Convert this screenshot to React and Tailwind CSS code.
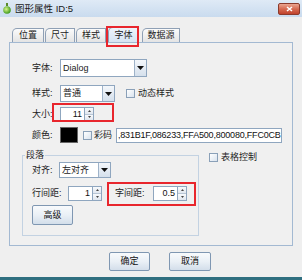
import React from 'react';

const ArrowDown = ({ w = 7, h = 4 }) => (
  <svg width={w} height={h} viewBox="0 0 7 4">
    <path d="M0 0h7L3.5 4z" fill="#111" />
  </svg>
);

function Select({ className, text }) {
  return (
    <div className={`flex bg-white border border-[#8fa6bf] ${className}`}>
      <div className="flex-1 flex items-center pl-[2px] text-[#1a1a1a]">{text}</div>
      <div className="w-[12px] flex items-center justify-center border-l border-[#9fb3c9] bg-gradient-to-b from-[#f4f7fb] to-[#d5e0ec]">
        <ArrowDown />
      </div>
    </div>
  );
}

function Spinner({ className, value }) {
  return (
    <div className={`flex ${className}`}>
      <div className="flex-1 flex items-center justify-end pr-[2px] bg-white border border-[#8fa6bf] text-[#111]">
        {value}
      </div>
      <div className="w-[9px] flex flex-col border-y border-r border-[#8fa6bf]">
        <div className="flex-1 flex items-center justify-center border-b border-[#b8c6d5] bg-gradient-to-b from-[#f8fafc] to-[#e1e7ef]">
          <svg width="3" height="2" viewBox="0 0 3 2"><path d="M0 2h3L1.5 0z" fill="#444" /></svg>
        </div>
        <div className="flex-1 flex items-center justify-center bg-gradient-to-b from-[#f8fafc] to-[#e1e7ef]">
          <svg width="3" height="2" viewBox="0 0 3 2"><path d="M0 0h3L1.5 2z" fill="#444" /></svg>
        </div>
      </div>
    </div>
  );
}

function Checkbox({ className = '' }) {
  return (
    <div className={`w-[9px] h-[9px] border border-[#8aa0b8] bg-gradient-to-br from-[#ffffff] to-[#d9e3ee] ${className}`} />
  );
}

function Button({ children, className = '' }) {
  return (
    <div className={`flex items-center justify-center border border-[#7f97b2] rounded-[2px] bg-gradient-to-b from-[#f8fafc] via-[#eaf0f6] to-[#d3deea] text-[#111] ${className}`}>
      {children}
    </div>
  );
}

export default function App() {
  return (
    <div className="relative w-[302px] h-[280px] overflow-hidden bg-[#efefef] border-b-[3px] border-[#2f6f80] font-['Liberation_Sans','Noto_Sans_CJK_SC',sans-serif] text-[9px] leading-none text-[#222]">
      {/* title bar */}
      <div className="h-[17px] flex items-center pl-[3px] pr-[2px] bg-gradient-to-b from-[#dfeaf6] to-[#c9dbee]">
        <svg width="8" height="11" viewBox="0 0 8 11">
          <defs>
            <radialGradient id="g" cx="0.4" cy="0.4" r="0.6">
              <stop offset="0" stopColor="#d8f58a" />
              <stop offset="1" stopColor="#3f9a1c" />
            </radialGradient>
          </defs>
          <rect x="3" y="0" width="2" height="3" fill="#5a8a2a" />
          <circle cx="4" cy="7" r="3.8" fill="url(#g)" />
        </svg>
        <span className="ml-[4px] text-[9.5px] text-[#1a1a1a]">图形属性 ID:5</span>
        <div className="ml-auto w-[22px] h-[12px] flex items-center justify-center rounded-[2px] border border-[#8b3a2c] bg-gradient-to-b from-[#eaa591] via-[#d66a52] to-[#c0412b]">
          <svg width="7" height="6" viewBox="0 0 7 6">
            <path d="M1 1l5 4M6 1L1 5" stroke="#fff" strokeWidth="1.6" />
          </svg>
        </div>
      </div>

      {/* tabs */}
      <div className="mt-[11px] ml-[12px] h-[14px] flex items-end gap-[1px]">
        <div className="w-[32px] h-[14px] flex items-center justify-center border border-b-0 border-[#8fa0b5] rounded-tl-[5px] bg-gradient-to-b from-[#fbfbfb] to-[#e4e4e4]">位置</div>
        <div className="w-[30px] h-[14px] flex items-center justify-center border border-b-0 border-[#8fa0b5] rounded-tl-[5px] bg-gradient-to-b from-[#fbfbfb] to-[#e4e4e4]">尺寸</div>
        <div className="w-[30px] h-[14px] flex items-center justify-center border border-b-0 border-[#8fa0b5] rounded-tl-[5px] bg-gradient-to-b from-[#fbfbfb] to-[#e4e4e4]">样式</div>
        <div className="ml-[1px] w-[31px] h-[15px] flex items-center justify-center border border-b-0 border-[#8fa0b5] rounded-tl-[5px] bg-gradient-to-b from-[#eef4fb] to-[#d6e4f3]">字体</div>
        <div className="ml-[2px] w-[38px] h-[14px] flex items-center justify-center border border-b-0 border-[#8fa0b5] rounded-tl-[5px] bg-gradient-to-b from-[#fbfbfb] to-[#e4e4e4]">数据源</div>
      </div>

      {/* panel */}
      <div className="ml-[9px] w-[284px] h-[204px] border border-[#a3b9d2] bg-[#f0f0f0] pl-[12px] pt-[16px]">
        <div className="pl-[10px]">
          <div className="h-[18px] flex items-center">
            <span className="w-[28px]">字体:</span>
            <Select className="w-[87px] h-[18px]" text="Dialog" />
          </div>
          <div className="mt-[8px] h-[17px] flex items-center">
            <span className="w-[28px]">样式:</span>
            <Select className="w-[55px] h-[17px]" text="普通" />
            <Checkbox className="ml-[11px]" />
            <span className="ml-[3px]">动态样式</span>
          </div>
          <div className="mt-[5px] h-[14px] flex items-center">
            <span className="w-[28px]">大小:</span>
            <Spinner className="w-[34px] h-[14px]" value="11" />
          </div>
          <div className="mt-[6px] h-[16px] flex items-center">
            <span className="w-[28px]">颜色:</span>
            <div className="w-[18px] h-[16px] bg-black border border-[#666]" />
            <Checkbox className="ml-[5px]" />
            <span className="ml-[2px]">彩码</span>
            <div className="ml-[4px] w-[166px] h-[15px] flex items-center overflow-hidden whitespace-nowrap bg-white border border-[#8fa6bf] pl-[1px] text-[9px] tracking-[-0.2px] text-[#111]">
              ,831B1F,086233,FFA500,800080,FFC0CB
            </div>
          </div>
        </div>

        <div className="mt-[12px] flex items-start">
          <div className="relative w-[177px] h-[81px] border border-[#c3d2e2] pl-[9px] pt-[6px]">
            <span className="absolute top-[-5px] left-[2px] px-[1px] bg-[#f0f0f0]">段落</span>
            <div className="h-[16px] flex items-center">
              <span className="w-[27px]">对齐:</span>
              <Select className="w-[52px] h-[16px]" text="左对齐" />
            </div>
            <div className="mt-[8px] h-[15px] flex items-center">
              <span className="w-[36px]">行间距:</span>
              <Spinner className="w-[34px] h-[15px]" value="1" />
              <span className="ml-[13px] w-[38px]">字间距:</span>
              <Spinner className="w-[34px] h-[15px]" value="0.5" />
            </div>
            <Button className="mt-[4px] w-[41px] h-[20px]">高级</Button>
          </div>
          <div className="ml-[10px] -mt-[2px] flex items-center">
            <Checkbox />
            <span className="ml-[3px]">表格控制</span>
          </div>
        </div>
      </div>

      {/* buttons */}
      <div className="mt-[6px] ml-[109px] flex gap-[19px]">
        <Button className="w-[41px] h-[19px]">确定</Button>
        <Button className="w-[42px] h-[19px]">取消</Button>
      </div>

      {/* red highlight boxes */}
      <div className="absolute left-[106px] top-[26px] w-[33px] h-[21px] border-2 border-[#e8262d]" />
      <div className="absolute left-[52px] top-[103px] w-[62px] h-[19px] border-2 border-[#e8262d]" />
      <div className="absolute left-[107px] top-[182px] w-[89px] h-[24px] border-2 border-[#e8262d]" />
    </div>
  );
}
